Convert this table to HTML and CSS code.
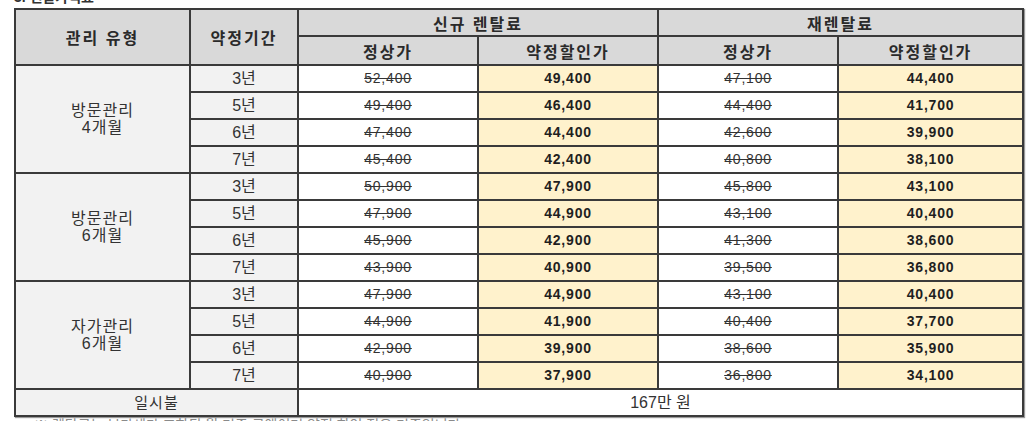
FILE: index.html
```html
<!DOCTYPE html>
<html lang="ko">
<head>
<meta charset="utf-8">
<title>렌탈가격표</title>
<link rel="stylesheet" href="styles.css">
</head>
<body>
<div class="page">
  <div class="title">3. 렌탈가격표</div>
  <table class="price">
    <colgroup>
      <col class="c-type"><col class="c-term"><col class="c-p"><col class="c-p"><col class="c-p"><col class="c-pl">
    </colgroup>
    <thead>
      <tr class="h1">
        <th rowspan="2">관리 유형</th>
        <th rowspan="2">약정기간</th>
        <th colspan="2">신규 렌탈료</th>
        <th colspan="2">재렌탈료</th>
      </tr>
      <tr class="h2">
        <th>정상가</th><th>약정할인가</th><th>정상가</th><th>약정할인가</th>
      </tr>
    </thead>
    <tbody>
      <tr class="row group-start">
        <td class="type" rowspan="4">방문관리<br>4개월</td>
        <td class="term">3년</td><td class="reg">52,400</td><td class="disc">49,400</td><td class="reg">47,100</td><td class="disc">44,400</td>
      </tr>
      <tr class="row"><td class="term">5년</td><td class="reg">49,400</td><td class="disc">46,400</td><td class="reg">44,400</td><td class="disc">41,700</td></tr>
      <tr class="row"><td class="term">6년</td><td class="reg">47,400</td><td class="disc">44,400</td><td class="reg">42,600</td><td class="disc">39,900</td></tr>
      <tr class="row"><td class="term">7년</td><td class="reg">45,400</td><td class="disc">42,400</td><td class="reg">40,800</td><td class="disc">38,100</td></tr>

      <tr class="row group-start">
        <td class="type" rowspan="4">방문관리<br>6개월</td>
        <td class="term">3년</td><td class="reg">50,900</td><td class="disc">47,900</td><td class="reg">45,800</td><td class="disc">43,100</td>
      </tr>
      <tr class="row"><td class="term">5년</td><td class="reg">47,900</td><td class="disc">44,900</td><td class="reg">43,100</td><td class="disc">40,400</td></tr>
      <tr class="row"><td class="term">6년</td><td class="reg">45,900</td><td class="disc">42,900</td><td class="reg">41,300</td><td class="disc">38,600</td></tr>
      <tr class="row"><td class="term">7년</td><td class="reg">43,900</td><td class="disc">40,900</td><td class="reg">39,500</td><td class="disc">36,800</td></tr>

      <tr class="row group-start">
        <td class="type" rowspan="4">자가관리<br>6개월</td>
        <td class="term">3년</td><td class="reg">47,900</td><td class="disc">44,900</td><td class="reg">43,100</td><td class="disc">40,400</td>
      </tr>
      <tr class="row"><td class="term">5년</td><td class="reg">44,900</td><td class="disc">41,900</td><td class="reg">40,400</td><td class="disc">37,700</td></tr>
      <tr class="row"><td class="term">6년</td><td class="reg">42,900</td><td class="disc">39,900</td><td class="reg">38,600</td><td class="disc">35,900</td></tr>
      <tr class="row"><td class="term">7년</td><td class="reg">40,900</td><td class="disc">37,900</td><td class="reg">36,800</td><td class="disc">34,100</td></tr>

      <tr class="row lump">
        <td class="lump-label" colspan="2">일시불</td>
        <td class="lump-price" colspan="4">167만 원</td>
      </tr>
    </tbody>
  </table>
  <div class="note">※ 렌탈료는 부가세가 포함된 월 기준 금액이며 약정 할인 적용 기준입니다.</div>
</div>
</body>
</html>
```

FILE: styles.css
```css
html, body {
  margin: 0;
  padding: 0;
  background: #ffffff;
}

body {
  font-family: "Liberation Sans", "Noto Sans CJK KR", Arial, sans-serif;
  color: #222222;
  overflow: hidden;
}

.page {
  padding-left: 14px;
}

.title {
  font-size: 14px;
  font-weight: 700;
  line-height: 16px;
  height: 16px;
  margin-top: -11px;
  margin-bottom: 3px;
  color: #333333;
}

.price {
  border-collapse: collapse;
  table-layout: fixed;
  width: 1008px;
  border: 2px solid #333333;
  box-shadow: 1px 1px 1px #9a9a9a;
}

.c-type { width: 175px; }
.c-term { width: 108px; }
.c-p { width: 180px; }
.c-pl { width: 185px; }

.price th,
.price td {
  border: 2px solid #3a3a3a;
  padding: 0;
  text-align: center;
  vertical-align: middle;
}

.price th {
  background: #d9d9d9;
  font-weight: 700;
  font-size: 16px;
  letter-spacing: 2px;
  color: #2a2a2a;
}

.h1 { height: 27px; }
.h2 { height: 29px; }

.row { height: 27px; }

.price td {
  font-size: 14px;
  line-height: 17px;
}

.price .type {
  background: #f2f2f2;
  font-size: 16px;
  letter-spacing: 1px;
  color: #333333;
}

.price .term {
  background: #f2f2f2;
  font-size: 16px;
  color: #333333;
}

.price .reg {
  background: #ffffff;
  color: #333333;
  text-decoration: line-through;
  letter-spacing: 0.8px;
}

.price .disc {
  background: #fff2cc;
  font-weight: 700;
  color: #1f1f1f;
  letter-spacing: 0.8px;
}

.price .lump-label {
  background: #f2f2f2;
  font-size: 15px;
  letter-spacing: 1px;
  color: #333333;
}

.price .lump-price {
  background: #ffffff;
  font-size: 16px;
  color: #333333;
}

.note {
  font-size: 14px;
  line-height: 16px;
  margin-top: 0;
  padding-left: 20px;
  color: #8a8a8a;
}
```
